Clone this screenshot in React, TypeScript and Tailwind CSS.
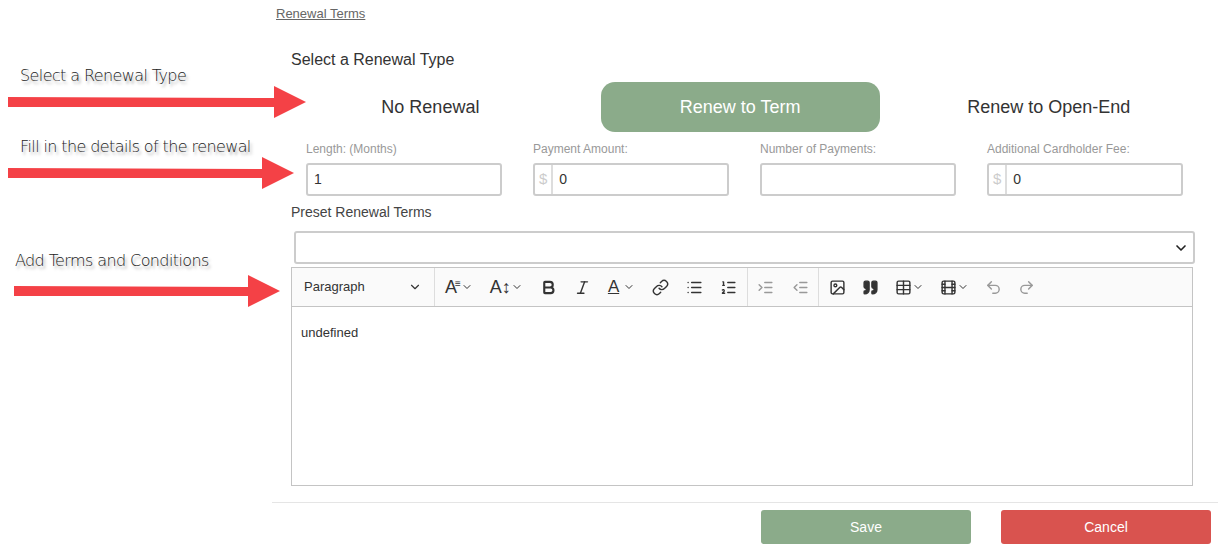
import React from "react";
import { ChevronDown, Bold, Italic, Link, List, ListOrdered, IndentIncrease, IndentDecrease, Image, Quote, Table, Film, Undo2, Redo2 } from "lucide-react";

const Arrow = ({ top, left, width }: { top: number; left: number; width: number }) => (
  <svg className="absolute" style={{ top, left }} width={width} height={36} viewBox={`0 0 ${width} 36`}>
    <polygon points={`0,13 ${width - 32},14 ${width - 32},2 ${width},18 ${width - 32},34 ${width - 32},23 0,23`} fill="#f44146" />
  </svg>
);

const Note = ({ top, left, children }: { top: number; left: number; children: React.ReactNode }) => (
  <div className="absolute text-[16px] text-[#222] [text-shadow:2px_3px_3px_rgba(0,0,0,0.35)]" style={{ top, left, fontFamily: "'DejaVu Sans', sans-serif", letterSpacing: "-0.6px", fontWeight: 300 }}>
    {children}
  </div>
);

const Field = ({ label, value, dollar }: { label: string; value: string; dollar?: boolean }) => (
  <div className="flex flex-col w-[196px]">
    <div className="text-[12px] text-[#999] h-[18px]">{label}</div>
    <div className="mt-[5px] h-[33px] border-2 border-[#ccc] rounded-[3px] flex items-center text-[14px] text-[#333]">
      {dollar && <span className="h-full flex items-center px-1 text-[#ccc] border-r-2 border-[#ddd] text-[15px]">$</span>}
      <span className="px-[6px]">{value}</span>
    </div>
  </div>
);

export default function App() {
  const ic = "w-[17px] h-[17px]";
  return (
    <div className="relative w-[1218px] h-[548px] bg-white overflow-hidden" style={{ fontFamily: "'Liberation Sans', Arial, sans-serif" }}>
      <Note top={64} left={20}>Select a Renewal Type</Note>
      <Note top={135} left={20}>Fill in the details of the renewal</Note>
      <Note top={249} left={15}>Add Terms and Conditions</Note>
      <Arrow top={84} left={8} width={298} />
      <Arrow top={155} left={8} width={286} />
      <Arrow top={273} left={14} width={266} />

      <div className="ml-[272px] flex flex-col">
        <div className="pl-[4px] pt-[4px] text-[13px] text-[#666] underline h-[22px]">Renewal Terms</div>
        <div className="pl-[19px]">
          <div className="mt-[26px] text-[16px] text-[#333]">Select a Renewal Type</div>
          <div className="mt-[10px] flex items-center h-[50px] text-[18px] text-[#333]">
            <div className="w-[280px] text-center">No Renewal</div>
            <div className="ml-[31px] w-[280px] h-[50px] rounded-[14px] bg-[#8bab8a] text-white flex items-center justify-center">Renew to Term</div>
            <div className="w-[340px] text-center">Renew to Open-End</div>
          </div>
          <div className="mt-[8px] pl-[15px] flex gap-[31px]">
            <Field label="Length: (Months)" value="1" />
            <Field label="Payment Amount:" value="0" dollar />
            <Field label="Number of Payments:" value="" />
            <Field label="Additional Cardholder Fee:" value="0" dollar />
          </div>
          <div className="mt-[6px] text-[14px] text-[#444]">Preset Renewal Terms</div>
          <div className="mt-[8px] ml-[3px] w-[901px] h-[33px] border-2 border-[#ccc] rounded-[3px] flex items-center justify-end pr-1">
            <ChevronDown className="w-[16px] h-[16px] text-[#222]" strokeWidth={2.5} />
          </div>
          <div className="mt-[3px] w-[902px] border border-[#c4c4c4]">
            <div className="h-[39px] bg-[#fafafa] border-b border-[#c4c4c4] flex items-center text-[#333]">
              <div className="w-[143px] h-full flex items-center justify-between px-[12px] text-[13px] border-r border-[#ddd]">
                Paragraph <ChevronDown className="w-[14px] h-[14px]" />
              </div>
              <div className="flex items-center gap-[17px] px-[10px] h-full border-r border-[#ddd]">
                <span className="flex items-center text-[18px]">A<span className="text-[10px] -ml-[2px] -mt-2">≡</span><ChevronDown className="w-3 h-3" /></span>
                <span className="flex items-center text-[18px]">A↕<ChevronDown className="w-3 h-3" /></span>
                <Bold className={ic} strokeWidth={3} />
                <Italic className={ic} />
                <span className="flex items-center text-[17px] underline">A<ChevronDown className="w-3 h-3 ml-1" /></span>
                <Link className={ic} />
                <List className={ic} />
                <ListOrdered className={ic} />
              </div>
              <div className="flex items-center gap-[18px] px-[9px] h-full border-r border-[#ddd] text-[#999]">
                <IndentIncrease className={ic} />
                <IndentDecrease className={ic} />
              </div>
              <div className="flex items-center gap-[16px] px-[10px] h-full text-[#333]">
                <Image className={ic} />
                <Quote className={ic} fill="#333" />
                <span className="flex items-center"><Table className={ic} /><ChevronDown className="w-3 h-3" /></span>
                <span className="flex items-center"><Film className={ic} /><ChevronDown className="w-3 h-3" /></span>
                <Undo2 className={`${ic} text-[#999]`} />
                <Redo2 className={`${ic} text-[#999]`} />
              </div>
            </div>
            <div className="h-[178px] px-[9px] py-[16px] text-[13px] text-[#333]">undefined</div>
          </div>
        </div>
        <div className="mt-[16px] border-t border-[#e5e5e5] flex justify-end gap-[30px] pr-[7px] pt-[7px]">
          <button className="w-[210px] h-[34px] bg-[#8bab8a] text-white text-[14px] rounded-[3px]">Save</button>
          <button className="w-[210px] h-[34px] bg-[#d9534f] text-white text-[14px] rounded-[3px]">Cancel</button>
        </div>
      </div>
    </div>
  );
}
